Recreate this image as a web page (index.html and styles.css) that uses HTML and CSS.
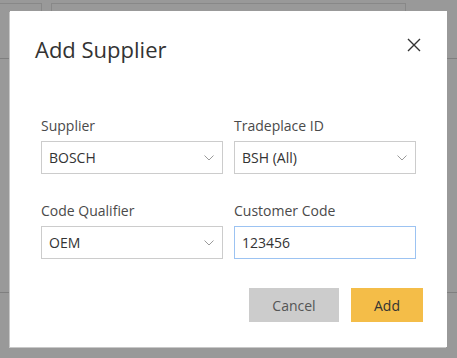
FILE: index.html
```html
<!DOCTYPE html>
<html>

<head>
    <title>Add Supplier</title>
    <link rel="stylesheet" href="styles.css">
</head>

<body>
    <!-- Page behind the dialog -->
    <div class="backdrop">
        <div class="top-row">
            <div class="bg-box bg-box-small"></div>
            <div class="bg-box bg-box-wide"></div>
        </div>
        <div class="bg-line bg-line-upper"></div>
        <div class="bg-line bg-line-lower"></div>
    </div>

    <!-- Dialog -->
    <div class="modal">
        <div class="modal-header">
            <h1>Add Supplier</h1>
            <button class="close-btn" aria-label="Close">
                <svg width="14" height="14" viewBox="0 0 14 14">
                    <path d="M1 1 L13 13 M13 1 L1 13" stroke="#333" stroke-width="1.4" fill="none" />
                </svg>
            </button>
        </div>

        <form class="supplier-form">
            <div class="field">
                <label for="supplier">Supplier</label>
                <div class="select-box" id="supplier">
                    <span>BOSCH</span>
                    <svg class="chevron" width="10" height="6" viewBox="0 0 10 6">
                        <path d="M0.5 0.5 L5 5 L9.5 0.5" stroke="#9a9a9a" stroke-width="1" fill="none" />
                    </svg>
                </div>
            </div>
            <div class="field">
                <label for="tradeplace">Tradeplace ID</label>
                <div class="select-box" id="tradeplace">
                    <span>BSH (All)</span>
                    <svg class="chevron" width="10" height="6" viewBox="0 0 10 6">
                        <path d="M0.5 0.5 L5 5 L9.5 0.5" stroke="#9a9a9a" stroke-width="1" fill="none" />
                    </svg>
                </div>
            </div>
            <div class="field">
                <label for="qualifier">Code Qualifier</label>
                <div class="select-box" id="qualifier">
                    <span>OEM</span>
                    <svg class="chevron" width="10" height="6" viewBox="0 0 10 6">
                        <path d="M0.5 0.5 L5 5 L9.5 0.5" stroke="#9a9a9a" stroke-width="1" fill="none" />
                    </svg>
                </div>
            </div>
            <div class="field">
                <label for="customer">Customer Code</label>
                <input type="text" id="customer" class="text-input focused" value="123456">
            </div>

            <div class="actions">
                <button type="button" class="btn btn-cancel">Cancel</button>
                <button type="submit" class="btn btn-add">Add</button>
            </div>
        </form>
    </div>
</body>

</html>
```

FILE: styles.css
```css
body {
    font-family: "Open Sans", "Noto Sans", sans-serif;
    background-color: #999999;
    margin: 0;
    padding: 0;
    width: 457px;
    height: 358px;
    overflow: hidden;
    position: relative;
}

/* Background page (dimmed) */
.backdrop {
    height: 100%;
}

.top-row {
    display: flex;
    gap: 9px;
    padding-top: 3px;
    height: 58px;
    box-sizing: border-box;
}

.bg-box {
    border: 1px solid #888888;
    border-bottom: none;
    height: 100%;
    box-sizing: border-box;
}

.bg-box-small {
    width: 42px;
    border-left: none;
}

.bg-box-wide {
    width: 355px;
}

.bg-line {
    border-top: 1px solid #7f7f7f;
}

.bg-line-lower {
    margin-top: 233px;
}

/* Dialog */
.modal {
    position: absolute;
    top: 11px;
    left: 10px;
    width: 437px;
    height: 336px;
    background-color: #ffffff;
    box-shadow: -1px 1px 0 #c8c8c8;
    box-sizing: border-box;
    padding: 23px 24px 0 25px;
}

.modal-header {
    display: flex;
    justify-content: space-between;
    align-items: flex-start;
}

h1 {
    font-size: 22px;
    font-weight: 400;
    color: #333333;
    margin: 0;
    line-height: 30px;
}

.close-btn {
    background: none;
    border: none;
    padding: 0;
    margin: 4px 2px 0 0;
    cursor: pointer;
    width: 14px;
    height: 14px;
    display: block;
}

.close-btn svg {
    display: block;
}

.supplier-form {
    display: grid;
    grid-template-columns: 182px 182px;
    column-gap: 11px;
    row-gap: 27px;
    padding: 52px 0 0 6px;
}

.field {
    display: flex;
    flex-direction: column;
}

label {
    font-size: 14px;
    color: #4a4a4a;
    line-height: 20px;
    margin-bottom: 5px;
}

.select-box,
.text-input {
    height: 33px;
    border: 1px solid #cccccc;
    box-sizing: border-box;
    font-family: inherit;
    font-size: 14px;
    color: #333333;
    padding: 0 7px;
    display: flex;
    align-items: center;
    justify-content: space-between;
    background: #ffffff;
}

.select-box .chevron {
    margin-right: 1px;
}

.text-input {
    width: 100%;
    outline: none;
}

.text-input.focused {
    border-color: #9cc3f2;
}

.actions {
    grid-column: 1 / 3;
    display: flex;
    justify-content: flex-end;
    gap: 12px;
    margin-top: 2px;
    margin-right: -7px;
}

.btn {
    height: 34px;
    border: none;
    font-family: inherit;
    font-size: 14px;
    cursor: pointer;
}

.btn-cancel {
    width: 90px;
    background-color: #cccccc;
    color: #555555;
}

.btn-add {
    width: 72px;
    background-color: #f4bd48;
    color: #333333;
}
```
